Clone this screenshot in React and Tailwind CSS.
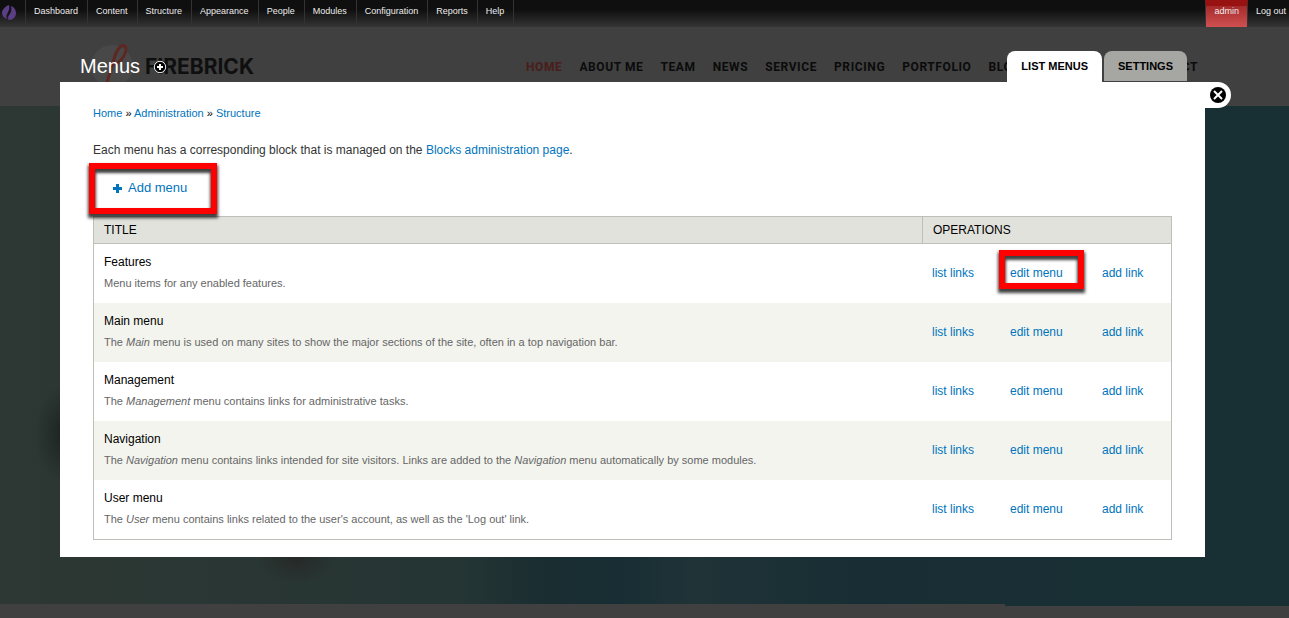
const toolbar = ["Dashboard", "Content", "Structure", "Appearance", "People", "Modules", "Configuration", "Reports", "Help"];
const siteNav = ["ABOUT ME", "TEAM", "NEWS", "SERVICE", "PRICING", "PORTFOLIO", "BLOG"];
const menus = [
  { title: "Features", text: <>Menu items for any enabled features.</>, marked: true },
  { title: "Main menu", text: <>The <em>Main</em> menu is used on many sites to show the major sections of the site, often in a top navigation bar.</> },
  { title: "Management", text: <>The <em>Management</em> menu contains links for administrative tasks.</> },
  { title: "Navigation", text: <>The <em>Navigation</em> menu contains links intended for site visitors. Links are added to the <em>Navigation</em> menu automatically by some modules.</> },
  { title: "User menu", text: <>The <em>User</em> menu contains links related to the user's account, as well as the 'Log out' link.</> },
];

function Highlight({ className }) {
  return (
    <span
      aria-hidden="true"
      className={`pointer-events-none absolute border-6 border-[#f00] shadow-[0_3px_3px_1px_rgba(0,0,0,0.75),inset_0_3px_3px_1px_rgba(0,0,0,0.75)] ${className}`}
    />
  );
}

function Toolbar() {
  return (
    <nav aria-label="Administration" className="flex h-[27px] bg-linear-to-b from-[#0f0f0f] from-35% to-[#353535] text-[9px] leading-[22px] text-[#eee]">
      <a href="#home" aria-label="Site home" className="flex w-[25px] pt-1 pl-[2px]">
        <svg width="14" height="17" viewBox="0 0 14 17">
          <path d="M7 1C4 2 0 5 0 9c0 3 2 5 5 6-1-2-1-3 0-5C7 7 8 4 7 1Z" fill="#5b3e86" />
          <path d="M9 2c3 1 5 4 5 7 0 4-3 7-7 7-2-1-2-3 0-5s3-5 2-9Z" fill="#5b3e86" />
          <path d="M8 2c1 3 0 4-1 5-2 2 1 2 0 4-1 1-2 2-1 4" fill="none" stroke="#1a1420" strokeWidth="0.8" />
        </svg>
      </a>
      <ul className="flex h-6 border-l border-[#333]">
        {toolbar.map((t) => (
          <li key={t} className="border-r border-[#333]">
            <a href="#admin" className="block pr-[9px] pl-2">{t}</a>
          </li>
        ))}
      </ul>
      <a href="#user" className="ml-auto border-x border-t-6 border-x-[#333] border-t-[#991212] bg-linear-to-b from-[#a52a2a] to-[#d05050] px-2 leading-[10px]">admin</a>
      <a href="#logout" className="pr-[3px] pl-2">Log out</a>
    </nav>
  );
}

function Site() {
  return (
    <div className="col-start-1 row-start-1 flex flex-col bg-[#404040] pt-[27px]">
      <header className="flex h-[79px] items-center pr-[91px] pl-[90px]">
        <svg width="46" height="46" viewBox="0 0 46 46" className="shrink-0" aria-hidden="true">
          <circle cx="22" cy="22" r="21" fill="#484848" />
          <path d="M16 42 24 15C27 4 32 0 35 2c3 4-2 15-10 18h-6" fill="none" stroke="#5e2721" strokeWidth="3" />
        </svg>
        <span className="ml-[9px] font-[Inter] text-[21px] font-bold text-[#0f0f0f]">FIREBRICK</span>
        <nav aria-label="Site" className="ml-auto flex w-[672px] gap-[17px] font-[Roboto] text-xs font-bold tracking-wider text-[#0b0b0b]">
          <a href="#home" className="text-[#4a1c1a]">HOME</a>
          {siteNav.map((t) => <a key={t} href="#site" className="whitespace-nowrap">{t}</a>)}
          <a href="#contact" className="ml-auto">CONTACT</a>
        </nav>
      </header>
      <div className="min-h-[498px] flex-1 bg-[radial-gradient(ellipse_30px_50px_at_5%_66%,#1c2422,transparent),radial-gradient(ellipse_40px_25px_at_23%_91%,#262a28,transparent),linear-gradient(to_right,#2d3733,#293633_20%,#243534_36%,#1a2d31_42%,#182e34_48%,#203337_54%,#182e34_66%,#182f34)]" />
      <div className="flex h-[14px] justify-end">
        <div className="h-[2px] w-[22%] bg-[#182f34]" />
      </div>
    </div>
  );
}

export default function App() {
  return (
    <div className="grid min-h-screen font-['Liberation_Sans',sans-serif]">
      <Site />
      <div className="relative col-start-1 row-start-1">
        <Toolbar />
        <div className="mt-6 mr-[84px] ml-[60px]">
          <div className="flex h-[31px] pr-[18px] pl-5">
            <h1 className="text-xl leading-[30px] text-white">Menus</h1>
            <button aria-label="Add to shortcuts" className="ml-[13px] h-[31px] w-[14px]">
              <svg width="14" height="14" viewBox="0 0 14 14">
                <circle cx="7" cy="7" r="5.7" fill="#000" stroke="#eee" />
                <path d="M7 4v6M4 7h6" stroke="#fff" strokeWidth="2" />
              </svg>
            </button>
            <nav aria-label="Tabs" className="ml-auto flex gap-[2px] text-[11px] leading-[30px] font-bold text-black">
              <a href="#list" className="rounded-t-lg bg-white px-[14px]">LIST MENUS</a>
              <a href="#settings" className="mb-px rounded-t-lg bg-[#a6a7a2] px-[14px]">SETTINGS</a>
            </nav>
          </div>
          <main className="relative bg-white px-[33px] pt-6 pb-[17px] text-xs">
            <button aria-label="Close" className="absolute top-0 left-full flex h-[26px] w-[26px] items-center rounded-r-full bg-white pl-[5px]">
              <svg width="16" height="16" viewBox="0 0 16 16">
                <circle cx="8" cy="8" r="8" fill="#000" />
                <path d="m4 4 8 8m0-8-8 8" stroke="#fff" strokeWidth="2" />
              </svg>
            </button>
            <p className="text-[11px] leading-[14px] text-black">
              <a href="#home" className="text-[#0074bd]">Home</a> » <a href="#admin" className="text-[#0074bd]">Administration</a> » <a href="#structure" className="text-[#0074bd]">Structure</a>
            </p>
            <p className="mt-5 leading-5 text-[#333]">
              Each menu has a corresponding block that is managed on the <a href="#blocks" className="text-[#0074bd]">Blocks administration page</a>.
            </p>
            <div className="mt-[18px] mb-[18px] flex pl-5">
              <a href="#add" className="relative flex items-center gap-[6px] text-[13px] leading-5 text-[#0074bd]">
                <svg width="9" height="9" viewBox="0 0 9 9" aria-hidden="true">
                  <path d="M3 0h3v3h3v3H6v3H3V6H0V3h3Z" fill="#0074bd" />
                </svg>
                Add menu
                <Highlight className="-top-[15px] -right-[30px] -bottom-4 -left-6" />
              </a>
            </div>
            <table className="w-full border-separate border-spacing-0 border border-[#bebfb9]">
              <thead>
                <tr className="h-[27px] bg-[#e1e2dc] text-left text-black">
                  <th className="border-r border-b border-[#bebfb9] px-[10px] font-normal">TITLE</th>
                  <th colSpan={3} className="border-b border-[#bebfb9] px-[10px] font-normal">OPERATIONS</th>
                </tr>
              </thead>
              <tbody>
                {menus.map((m) => (
                  <tr key={m.title} className="h-[59px] even:bg-[#f3f4ee]">
                    <td className="px-[10px] pb-[2px]">
                      <div className="leading-4 text-black">{m.title}</div>
                      <div className="mt-[5px] text-[11px] leading-4 text-[#666]">{m.text}</div>
                    </td>
                    <td className="w-[78px] pb-[2px] pl-[9px]"><a href="#list" className="text-[#0074bd]">list links</a></td>
                    <td className="w-[92px] pb-[2px] pl-[9px]">
                      <a href="#edit" className="relative text-[#0074bd]">
                        edit menu
                        {m.marked && <Highlight className="-top-4 -right-[21px] -bottom-[9px] -left-[11px]" />}
                      </a>
                    </td>
                    <td className="w-[78px] pb-[2px] pl-[9px]"><a href="#add" className="text-[#0074bd]">add link</a></td>
                  </tr>
                ))}
              </tbody>
            </table>
          </main>
        </div>
      </div>
    </div>
  );
}
